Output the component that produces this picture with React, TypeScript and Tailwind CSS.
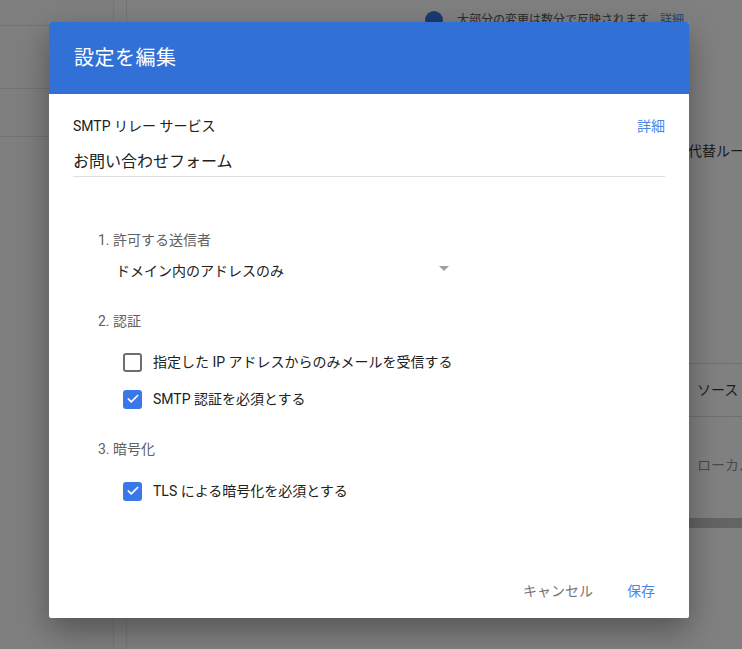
import { Check } from "lucide-react";

const font = { fontFamily: 'Roboto, "Noto Sans CJK JP", sans-serif' };

function Checkbox({ checked, label }: { checked: boolean; label: string }) {
  return (
    <div className="flex items-center h-[20px] pl-[50px]">
      {checked ? (
        <div className="w-[19px] h-[19px] rounded-[3px] bg-[#3b78e7] flex items-center justify-center">
          <Check size={14} strokeWidth={3} className="text-white" />
        </div>
      ) : (
        <div className="w-[19px] h-[19px] rounded-[3px] border-2 border-[#6e6e6e]" />
      )}
      <span className="ml-[11px] text-[14px] text-[#212121]">{label}</span>
    </div>
  );
}

export default function App() {
  return (
    <div style={font} className="relative w-[742px] h-[649px] overflow-hidden bg-[#808080]">
      {/* dimmed page behind */}
      <div className="flex h-full">
        <div className="w-[114px] shrink-0 border-r border-[#767676] bg-[#7f7f7f]">
          <div className="h-[26px] border-b border-[#737373]" />
          <div className="h-[63px] border-b border-[#737373]" />
          <div className="h-[48px] border-b border-[#737373]" />
        </div>
        <div className="w-[13px] shrink-0 border-r border-[#767676]" />
        <div className="flex-1 min-w-0 flex flex-col overflow-hidden">
          <div className="flex items-center pt-[11px] pl-[298px] gap-[14px]">
            <div className="w-[18px] h-[18px] rounded-full bg-[#1c3b70] shrink-0" />
            <span className="text-[12px] text-[#2b2b2b] whitespace-nowrap">
              大部分の変更は数分で反映されます<span className="ml-[11px] text-[#243f73]">詳細</span>
            </span>
          </div>
          <div className="pl-[561px] mt-[112px] h-[20px] text-[14px] text-[#1c1c1c] whitespace-nowrap">代替ルール</div>
          <div className="ml-[562px] mt-[202px] border-t border-[#707070] h-[53px] flex items-center pl-[8px] text-[14px] text-[#1c1c1c] whitespace-nowrap">
            ソース
          </div>
          <div className="ml-[562px] border-t border-[#707070] h-[102px] pt-[38px] pl-[8px] text-[14px] text-[#4a4a4a] whitespace-nowrap">
            ローカル
          </div>
          <div className="ml-[562px] h-[10px] bg-[#646464]" />
        </div>
      </div>

      {/* dialog */}
      <div className="absolute left-[49px] top-[22px] w-[640px] h-[596px] bg-white rounded-[2px] shadow-[0_12px_32px_rgba(0,0,0,0.35)] flex flex-col">
        <div className="h-[72px] bg-[#3170d6] rounded-t-[2px] flex items-center pl-[25px]">
          <h1 className="text-[20px] text-white tracking-[0.5px]">設定を編集</h1>
        </div>
        <div className="flex-1 px-[24px] pt-[22px] flex flex-col">
          <div className="flex justify-between h-[20px] items-center">
            <span className="text-[14px] text-[#212121]">SMTP リレー サービス</span>
            <span className="text-[14px] text-[#4a86e8]">詳細</span>
          </div>
          <div className="mt-[14px] h-[27px] border-b border-[#e0e0e0] text-[16px] leading-[24px] text-[#212121]">
            お問い合わせフォーム
          </div>

          <div className="mt-[53px] pl-[25px] h-[20px] leading-[20px] text-[14px] text-[#616161]">1. 許可する送信者</div>
          <div className="mt-[11px] pl-[43px] w-[376px] h-[20px] flex items-center justify-between">
            <span className="text-[14px] text-[#212121]">ドメイン内のアドレスのみ</span>
            <span className="w-0 h-0 border-l-[5px] border-r-[5px] border-t-[5px] border-l-transparent border-r-transparent border-t-[#a0a0a0] mb-[5px]" />
          </div>

          <div className="mt-[30px] pl-[25px] h-[20px] leading-[20px] text-[14px] text-[#616161]">2. 認証</div>
          <div className="mt-[21px] flex flex-col gap-[17px]">
            <Checkbox checked={false} label="指定した IP アドレスからのみメールを受信する" />
            <Checkbox checked label="SMTP 認証を必須とする" />
          </div>

          <div className="mt-[30px] pl-[25px] h-[20px] leading-[20px] text-[14px] text-[#616161]">3. 暗号化</div>
          <div className="mt-[22px]">
            <Checkbox checked label="TLS による暗号化を必須とする" />
          </div>
        </div>
        <div className="h-[54px] flex items-end justify-end pr-[34px] pb-[17px] gap-[34px] text-[14px] leading-[20px]">
          <span className="text-[#757575]">キャンセル</span>
          <span className="text-[#4a86e8]">保存</span>
        </div>
      </div>
    </div>
  );
}
